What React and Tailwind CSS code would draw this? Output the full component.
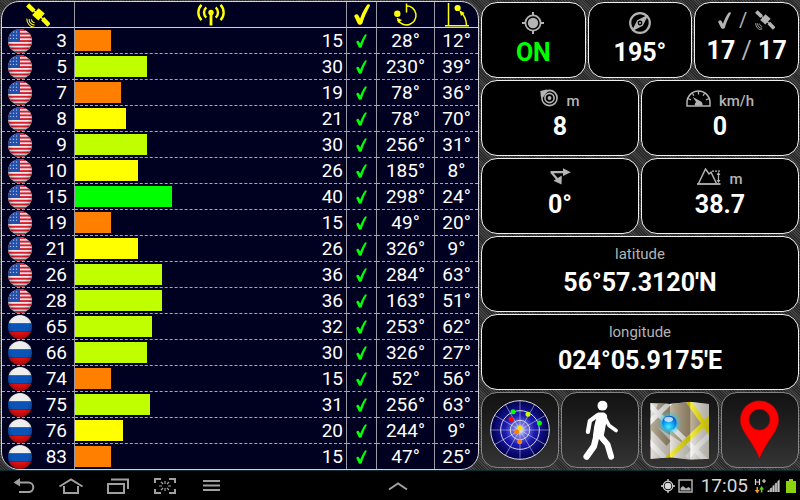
import React from "react";

const satellites = [
  ["us", 3, 15, 28, 12],
  ["us", 5, 30, 230, 39],
  ["us", 7, 19, 78, 36],
  ["us", 8, 21, 78, 70],
  ["us", 9, 30, 256, 31],
  ["us", 10, 26, 185, 8],
  ["us", 15, 40, 298, 24],
  ["us", 19, 15, 49, 20],
  ["us", 21, 26, 326, 9],
  ["us", 26, 36, 284, 63],
  ["us", 28, 36, 163, 51],
  ["ru", 65, 32, 253, 62],
  ["ru", 66, 30, 326, 27],
  ["ru", 74, 15, 52, 56],
  ["ru", 75, 31, 256, 63],
  ["ru", 76, 20, 244, 9],
  ["ru", 83, 15, 47, 25],
];

const FULL_SCALE = 101;

function barColor(snr) {
  if (snr >= 40) return "bg-[#00ff00]";
  if (snr >= 30) return "bg-[#c0ff00]";
  if (snr >= 20) return "bg-[#ffff00]";
  return "bg-[#ff8000]";
}

function Flag({ country }) {
  const us = country === "us";
  return (
    <svg viewBox="0 0 24 24" className="block h-6 w-6 rounded-full" role="img" aria-label={us ? "GPS" : "GLONASS"}>
      <defs>
        <radialGradient id={"gloss-" + country} cx="0.5" cy="0.4" r="0.6">
          <stop offset="0.6" stopColor="#000" stopOpacity="0" />
          <stop offset="1" stopColor="#000" stopOpacity="0.28" />
        </radialGradient>
      </defs>
      {us ? (
        <>
          <rect width="24" height="24" fill="#ece8e8" />
          {[0, 1, 2, 3, 4, 5, 6].map((i) => (
            <rect key={i} y={i * 3.7} width="24" height="1.9" fill="#dc1c30" />
          ))}
          <rect width="12" height="12.9" fill="#2450ac" />
          {[3, 6.2, 9.4].map((y) =>
            [2.5, 5.5, 8.5].map((x) => <circle key={x + "-" + y} cx={x} cy={y} r="0.7" fill="#a8bce8" />)
          )}
        </>
      ) : (
        <>
          <rect width="24" height="8.5" fill="#eeeeee" />
          <rect y="8.5" width="24" height="8" fill="#0a54b8" />
          <rect y="16.5" width="24" height="8" fill="#e01010" />
        </>
      )}
      <rect width="24" height="24" fill={"url(#gloss-" + country + ")"} />
    </svg>
  );
}

function Satellite({ className }) {
  return (
    <svg viewBox="0 0 24 24" className={className} fill="none" stroke="currentColor" aria-hidden="true">
      <path d="M1.6 1.8 8 8M16.6 15.6 23 22.2" strokeWidth="4.4" />
      <path d="M7 7 18 17" strokeWidth="1.6" />
      <path d="M12.6 5.2 18.8 10.4 12.4 17.4 6.200 12z" fill="currentColor" stroke="none" />
      <path d="M5.6 16.3a2.8 2.8 0 0 0 3 3.2M3.2 16a5.4 5.4 0 0 0 5.4 6M.9 15.6a8 8 0 0 0 7.6 8.6" strokeWidth="1.1" />
    </svg>
  );
}

function Tick({ className }) {
  return (
    <svg viewBox="0 0 16 21" className={className} fill="currentColor" aria-hidden="true">
      <path d="M.3 12.600C0 10.600 3.200 9.300 4.300 11.200L6.100 14.400C7.800 9.800 10.400 4.500 13 1 14.100-.4 16.500.2 15.800 2 12.900 7.500 10.300 13 8.500 19 7.800 21.300 4.500 21.300 3.700 19.500z" />
    </svg>
  );
}

function Antenna() {
  return (
    <svg viewBox="0 0 30 22" className="mx-auto block h-[22px] w-[30px]" fill="none" stroke="currentColor" strokeWidth="2.4" aria-hidden="true">
      <circle cx="15" cy="8.5" r="2.7" fill="currentColor" stroke="none" />
      <path d="M15 9v12.500" strokeWidth="2.8" />
      <path d="M10.300 3.400a6.800 6.800 0 0 0 0 10.200M19.700 3.400a6.800 6.800 0 0 1 0 10.200M5.500.800a11 11 0 0 0 0 15.400M24.500.800a11 11 0 0 1 0 15.400" />
    </svg>
  );
}

function Azimuth() {
  return (
    <svg viewBox="0 0 24 24" className="mx-auto block h-6 w-6" fill="none" stroke="currentColor" strokeWidth="1.5" aria-hidden="true">
      <path d="M12.500.500v9M12.500 2.800a9.600 9.600 0 1 1-8.600 14" />
      <circle cx="3.300" cy="10.800" r="3.200" fill="currentColor" stroke="none" />
      <path d="M2.800 14.800 8 17 4 20z" fill="currentColor" stroke="none" />
    </svg>
  );
}

function Elevation() {
  return (
    <svg viewBox="0 0 24 24" className="mx-auto block h-6 w-6" fill="none" stroke="currentColor" strokeWidth="1.5" aria-hidden="true">
      <path d="M3.500 0v23M0 22.800h24M21.500 22.500C21.300 17 19.500 12.500 16 9" />
      <circle cx="12.600" cy="5" r="3.100" fill="currentColor" stroke="none" />
      <path d="M14.300 7.200 19.600 10 16 13z" fill="currentColor" stroke="none" />
    </svg>
  );
}

function Target({ className }) {
  return (
    <svg viewBox="0 0 22 22" className={className} fill="none" stroke="currentColor" aria-hidden="true">
      <circle cx="11" cy="11" r="7.6" strokeWidth="1.8" />
      <circle cx="11" cy="11" r="5.2" fill="currentColor" stroke="none" />
      <path d="M11 0v4M11 18v4M0 11h4M18 11h4" strokeWidth="2" />
    </svg>
  );
}

function Compass() {
  return (
    <svg viewBox="0 0 22 22" className="h-[22px] w-[22px]" fill="none" stroke="currentColor" aria-hidden="true">
      <circle cx="11" cy="11" r="9.8" strokeWidth="2.2" />
      <path d="M19.5 2.5 13.8 13.8 2.5 19.5 8.2 8.2z" fill="currentColor" stroke="none" />
      <circle cx="11" cy="11" r="2.4" fill="#000" stroke="none" />
      <circle cx="11" cy="11" r="1" fill="currentColor" stroke="none" />
    </svg>
  );
}

function Accuracy() {
  return (
    <svg viewBox="0 0 18 18" className="h-[18px] w-[18px]" fill="none" stroke="currentColor" aria-hidden="true">
      <circle cx="9.5" cy="9" r="7.600" strokeWidth="1.600" />
      <circle cx="9.5" cy="9" r="4.600" strokeWidth="1.600" />
      <circle cx="9.5" cy="9" r="1.900" fill="currentColor" stroke="none" />
      <path d="M.3 2 6.500.6 8.600 2 6 4.500 3 8.500.8 7.5z" fill="currentColor" stroke="none" />
    </svg>
  );
}

function Speedometer() {
  return (
    <svg viewBox="0 0 25 17" className="h-[17px] w-[25px]" fill="none" stroke="currentColor" aria-hidden="true">
      <path d="M1 16V12.500a11.500 11.500 0 0 1 23 0V16z" strokeWidth="1.5" />
      <path d="M12.500 1v3.500M6.300 3l1.600 2.800M18.700 3l-1.600 2.800M2 8.500l3 1.300M23 8.500l-3 1.300" strokeWidth="1.3" />
      <path d="M6.800 7 14.500 11.200A4 4 0 0 1 16.400 15.800H8.800A4 4 0 0 1 10 12z" fill="currentColor" stroke="none" />
    </svg>
  );
}

function Bearing() {
  return (
    <svg viewBox="0 0 21 17" className="h-[17px] w-[21px]" fill="none" stroke="currentColor" strokeWidth="2.2" aria-hidden="true">
      <path d="M.500 4.200h14M1.500 4.500l6.500 7.500" />
      <path d="M13 .3 20.800 4.200 13 8zM11.800 7.500 11.500 16.500 3.500 12.800z" fill="currentColor" stroke="none" />
    </svg>
  );
}

function Altitude() {
  return (
    <svg viewBox="0 0 24 17" className="h-[17px] w-[24px]" fill="none" stroke="currentColor" aria-hidden="true">
      <path d="M0 16h23.500" strokeWidth="1.8" />
      <path d="M1.500 15.500 8.500 1l3.500 5 2-1.800 5.500 11.300" strokeWidth="1.5" />
      <path d="M15 3.200h9" strokeWidth="1.2" strokeDasharray="2 1" />
      <path d="M21.500 5v9" strokeWidth="1.2" />
      <path d="M19.500 7 21.500 4l2 3zM19.500 12l2 3 2-3z" fill="currentColor" stroke="none" />
    </svg>
  );
}

function Unit({ children }) {
  return <span className="pt-1.5 font-medium">{children}</span>;
}

const spacing = {
  normal: " gap-[5px] pt-1.5",
  low: " gap-1.5 pt-[9px]",
  wide: " gap-[7px] pt-1.5",
};

function Card({ span, fit = "normal", label, children }) {
  return (
    <section className={"flex flex-col items-center rounded-2xl border border-[#f0f0f0] bg-black " + span + spacing[fit]}>
      <div className="flex h-[22px] items-center gap-2 text-[15px] leading-[22px] text-[#b4b4b4]">{label}</div>
      <div className="text-[25px] leading-[26px] font-bold text-white">{children}</div>
    </section>
  );
}

function ToolButton({ label, children }) {
  return (
    <button
      type="button"
      aria-label={label}
      className="col-span-3 flex items-center justify-center rounded-2xl border border-[#858585] bg-linear-to-b from-[#121212] to-[#343434]"
    >
      {children}
    </button>
  );
}

function SkyPlot() {
  const spokes = [0, 30, 60, 90, 120, 150];
  const dots = [
    [99, 82, "#00ff00"],
    [144, 90, "#c8ff00"],
    [178, 116, "#00ff00"],
    [93, 104, "#ff0000"],
    [110, 142, "#ff8000"],
    [120, 131, "#ffe000"],
    [119, 172, "#ff8000"],
  ];
  return (
    <svg viewBox="30 47 180 180" className="h-[60px] w-[60px]" aria-hidden="true">
      <defs>
        <radialGradient id="sky">
          <stop offset="0" stopColor="#ffffff" />
          <stop offset="0.2" stopColor="#7878e0" />
          <stop offset="0.5" stopColor="#1c1cb4" />
          <stop offset="1" stopColor="#000048" />
        </radialGradient>
      </defs>
      <circle cx="120" cy="137" r="88" fill="url(#sky)" />
      <g stroke="#d8d8ee" fill="none">
        {spokes.map((a) => (
          <path key={a} d="M32 137h176" strokeWidth="2.5" opacity="0.6" transform={"rotate(" + a + " 120 137)"} />
        ))}
        <circle cx="120" cy="137" r="29" strokeWidth="3" />
        <circle cx="120" cy="137" r="58" strokeWidth="3" />
        <circle cx="120" cy="137" r="88" strokeWidth="3" />
      </g>
      {dots.map(([x, y, c]) => (
        <circle key={x} cx={x} cy={y} r="7.5" fill={c} />
      ))}
    </svg>
  );
}

function Walker() {
  return (
    <svg viewBox="304 44 110 184" className="h-[61px] w-[37px]" fill="none" stroke="#fff" strokeLinecap="round" strokeLinejoin="round" aria-hidden="true">
      <circle cx="365" cy="61" r="15" fill="#fff" stroke="none" />
      <path d="M352 84h18q8 4 7 14l-6 32-5 26-28-2 4-30z" fill="#fff" strokeWidth="4" />
      <path d="M350 90 327 107 321 140" strokeWidth="13" />
      <path d="M372 96 385 121 406 136" strokeWidth="11" />
      <path d="M347 152 339 184 317 215" strokeWidth="19" />
      <path d="M356 150 380 178 391 215" strokeWidth="18" />
    </svg>
  );
}

function MapSheet() {
  return (
    <svg viewBox="30 45 180 177" className="h-[59px] w-[60px]" aria-hidden="true">
      <defs>
        <clipPath id="sheet">
          <path d="M31 51 90 54 151 47 207 54V218L151 221 90 214 31 219z" />
        </clipPath>
        <linearGradient id="fold">
          <stop offset="0" stopColor="#fff" stopOpacity="0.3" />
          <stop offset="1" stopColor="#000" stopOpacity="0.2" />
        </linearGradient>
        <radialGradient id="marble" cx="0.45" cy="0.75" r="0.7">
          <stop offset="0" stopColor="#40f0ff" />
          <stop offset="0.6" stopColor="#1090f0" />
          <stop offset="1" stopColor="#0058c8" />
        </radialGradient>
        <radialGradient id="halo">
          <stop offset="0.5" stopColor="#20c8f0" stopOpacity="0.8" />
          <stop offset="1" stopColor="#20c8f0" stopOpacity="0" />
        </radialGradient>
      </defs>
      <g clipPath="url(#sheet)">
        <rect x="30" y="45" width="180" height="180" fill="#dcd8ce" />
        <path d="M55 50H140L190 118 130 172 32 110z" fill="#a89676" />
        <path d="M31 100 92 165 80 180 31 130z" fill="#a08e70" />
        <g stroke="#f4f4f2" strokeWidth="15" fill="none">
          <path d="M25 55 200 225M25 112 95 45M25 165 75 215M140 215 215 140" />
        </g>
        <g stroke="#f2e600" strokeWidth="15" fill="none">
          <path d="M78 222 215 92M145 45 215 145" />
        </g>
        <rect x="31" y="45" width="59" height="180" fill="url(#fold)" />
        <rect x="90" y="45" width="61" height="180" fill="url(#fold)" />
        <rect x="151" y="45" width="57" height="180" fill="url(#fold)" />
      </g>
      <circle cx="88" cy="112" r="36" fill="url(#halo)" />
      <circle cx="88" cy="111" r="22" fill="url(#marble)" />
      <ellipse cx="86" cy="100" rx="13" ry="8" fill="#fff" opacity="0.7" />
    </svg>
  );
}

function Pin() {
  return (
    <svg viewBox="298 50 122 180" className="h-[60px] w-[41px]" aria-hidden="true">
      <path
        d="M359 52a58 58 0 0 0-58 58c0 34 36 60 58 117 22-57 58-83 58-117a58 58 0 0 0-58-58zm0 26a31 31 0 1 1 0 62 31 31 0 0 1 0-62z"
        fill="#ff0000"
        fillRule="evenodd"
        stroke="#7a1010"
        strokeWidth="2"
      />
    </svg>
  );
}

function NavButton({ label, children }) {
  return (
    <button type="button" aria-label={label} className="flex h-full w-[47px] items-center justify-center">
      <svg viewBox="0 0 26 18" className="h-[18px] w-[26px]" fill="none" stroke="#a0a0a0" strokeWidth="2" aria-hidden="true">
        {children}
      </svg>
    </button>
  );
}

const head = "h-[26px] border-b border-[#d0d0d8] p-0 font-normal";
const line = " border-r border-r-[#9a9aa4]";

export default function App() {
  return (
    <div className="flex min-h-screen flex-col bg-black font-['Roboto','Liberation_Sans',sans-serif]">
      <main className="grid grid-cols-[478fr_318fr] gap-[2px] border-b border-[#0c2c34] bg-[#3c3c3c] bg-[repeating-linear-gradient(45deg,#282828_0px,#282828_1px,#444444_1px,#444444_2px)] px-px pt-px">
        <div className="overflow-hidden rounded-[18px] border border-[#d4d4d8] bg-[#000020]">
          <table className="w-full table-fixed border-separate border-spacing-0 text-[19px] leading-[25px] text-white">
            <thead className="text-[#ffff00]">
              <tr>
                <th scope="col" aria-label="Satellite" className={head + line + " w-[73px]"}>
                  <Satellite className="mx-auto block h-6 w-6" />
                </th>
                <th scope="col" aria-label="Signal" className={head + line}>
                  <Antenna />
                </th>
                <th scope="col" aria-label="Used" className={head + line + " w-[30px]"}>
                  <Tick className="mx-auto block h-[21px] w-4" />
                </th>
                <th scope="col" aria-label="Azimuth" className={head + line + " w-[58px]"}>
                  <Azimuth />
                </th>
                <th scope="col" aria-label="Elevation" className={head + " w-[43px]"}>
                  <Elevation />
                </th>
              </tr>
            </thead>
            <tbody>
              {satellites.map(([country, prn, snr, azimuth, elevation], i) => {
                const cell = "p-0" + (i < satellites.length - 1 ? " h-[26px] border-b border-dashed border-b-[#a8a8b4]" : " h-[25px]");
                const solid = " [border-right:1px_solid_#9a9aa4]";
                return (
                  <tr key={prn}>
                    <td className={cell + solid}>
                      <div className="flex items-center justify-between pr-[7px] pl-1.5">
                        <Flag country={country} />
                        {prn}
                      </div>
                    </td>
                    <td className={cell + solid}>
                      <div className="flex items-center justify-between pr-[3px]">
                        <div className="flex-1">
                          <div className={"h-[21px] max-w-full " + barColor(snr)} style={{ width: (snr * 100) / FULL_SCALE + "%" }} />
                        </div>
                        <span className="w-6 text-right">{snr}</span>
                      </div>
                    </td>
                    <td className={cell + solid}>
                      <Tick className="mx-auto block h-[14px] w-[11px] text-[#00ff00]" />
                    </td>
                    <td className={cell + solid + " text-center"}>{azimuth}°</td>
                    <td className={cell + " text-center"}>{elevation}°</td>
                  </tr>
                );
              })}
            </tbody>
          </table>
        </div>

        <div className="grid auto-rows-fr grid-cols-12 gap-[2px] pt-px pb-[2px]">
          <Card span="col-span-4" fit="low" label={<Target className="h-[22px] w-[22px]" />}>
            <span className="text-[#00ff00]">ON</span>
          </Card>
          <Card span="col-span-4" fit="low" label={<Compass />}>
            195°
          </Card>
          <Card
            span="col-span-4"
            fit="wide"
            label={
              <>
                <Tick className="h-[17px] w-[13px]" />
                <span className="text-[20px]">/</span>
                <Satellite className="h-5 w-5" />
              </>
            }
          >
            17 <span className="font-normal text-[#b4b4b4]">/</span> 17
          </Card>
          <Card span="col-span-6" label={<><Accuracy /><Unit>m</Unit></>}>
            8
          </Card>
          <Card span="col-span-6" label={<><Speedometer /><Unit>km/h</Unit></>}>
            0
          </Card>
          <Card span="col-span-6" label={<Bearing />}>
            0°
          </Card>
          <Card span="col-span-6" label={<><Altitude /><Unit>m</Unit></>}>
            38.7
          </Card>
          <Card span="col-span-12" label="latitude">
            56°57.3120'N
          </Card>
          <Card span="col-span-12" label="longitude">
            024°05.9175'E
          </Card>
          <ToolButton label="Sky view">
            <SkyPlot />
          </ToolButton>
          <ToolButton label="Walking">
            <Walker />
          </ToolButton>
          <ToolButton label="Map">
            <MapSheet />
          </ToolButton>
          <ToolButton label="Place">
            <Pin />
          </ToolButton>
        </div>
      </main>

      <footer className="flex h-[29px] items-center justify-between">
        <nav className="flex h-full flex-1">
          <NavButton label="Back">
            <path d="M5 5.500h12.500a4.800 4.800 0 0 1 0 9.600H8" />
            <path d="M9 1 2.500 5.500 9 9.500z" fill="#a0a0a0" stroke="none" />
          </NavButton>
          <NavButton label="Home">
            <path d="M1.500 9.500 13 2.500 24.500 9.500M6 9v7h14V9" />
          </NavButton>
          <NavButton label="Recent apps">
            <path d="M3 7h16v9H3zM6 2.500h17v9.500" />
          </NavButton>
          <NavButton label="Screenshot">
            <path d="M3 6V2h6M17 2h6v4M23 12v4h-6M9 16H3v-4" />
            <path d="M13 4v3M13 11v3M7 9h3M16 9h3M9 5l2 2M17 5l-2 2M9 13l2-2M17 13l-2-2" strokeWidth="1.2" />
          </NavButton>
          <NavButton label="Menu">
            <path d="M4 4h17M4 8.500h17M4 13h17" />
          </NavButton>
        </nav>
        <NavButton label="Show dock">
          <path d="M4 12.500 13 6.500 22 12.500" />
        </NavButton>
        <div className="flex flex-1 items-center justify-end pr-1 text-[19px] leading-[25px] text-[#d8d8d8]">
          <Target className="mr-[3px] h-[14px] w-[14px]" />
          <svg viewBox="0 0 15 14" className="mr-2 h-[14px] w-[15px]" aria-hidden="true">
            <path d="M1 1h13v12H1z" fill="none" stroke="#b0b0b0" strokeWidth="1.5" />
            <path d="M2.500 11.500V9L5 7l3 2.500L10.500 8l2 1.500v2z" fill="#b0b0b0" />
          </svg>
          <time>17:05</time>
          <svg viewBox="0 0 12 16" className="ml-1.5 h-4 w-3" aria-hidden="true">
            <path d="M1.500 1v6M5.500 1v6M1.500 4h4M8 3h4M10 1v4" stroke="#d8d8d8" strokeWidth="1.2" />
            <path d="M2.500 9v3H.8l2.400 3.500L5.600 12H4V9z" fill="#f0a020" />
            <path d="M6.800 14.500v-3H5.200L7.600 8 10 11.500H8.400v3z" fill="#60d020" />
          </svg>
          <svg viewBox="0 0 13 13" className="ml-px h-[13px] w-[13px]" aria-hidden="true">
            <path d="M13 0v13H0z" fill="#606060" />
            <path d="M1.500 11.500v1.500M4 9v4M6.500 6.500V13M9 4v9M11.500 1.500V13" stroke="#c8c8c8" strokeWidth="1.5" />
          </svg>
          <svg viewBox="0 0 10 14" className="ml-1.5 h-[14px] w-[10px]" aria-hidden="true">
            <path d="M3 0h4v2h3v12H0V2h3z" fill="#8fd010" />
          </svg>
        </div>
      </footer>
    </div>
  );
}
